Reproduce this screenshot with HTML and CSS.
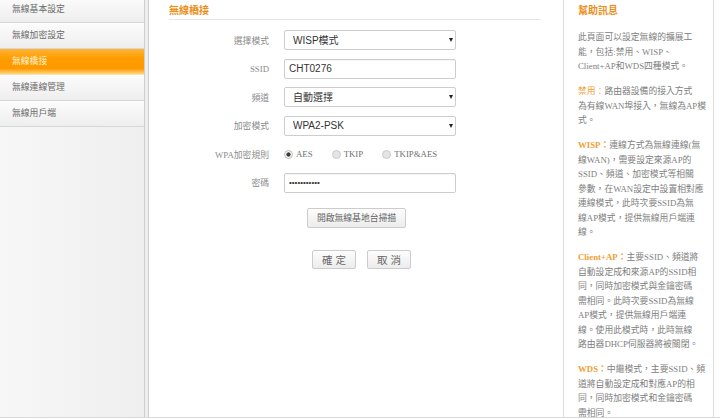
FILE: index.html
```html
<!DOCTYPE html>
<html lang="zh-Hant">
<head>
    <meta charset="UTF-8">
    <meta name="viewport" content="width=device-width, initial-scale=1.0">
    <title>無線橋接</title>
    <link rel="stylesheet" href="styles.css">
</head>
<body>
    <div class="page">
        <ul class="menu">
            <li>無線基本設定</li>
            <li>無線加密設定</li>
            <li class="active">無線橋接</li>
            <li>無線連線管理</li>
            <li>無線用戶端</li>
        </ul>

        <div class="main">
            <div class="content">
                <h2 class="title">無線橋接</h2>
                <form class="form">
                    <div class="row">
                        <label>選擇模式</label>
                        <div class="select-wrap">
                            <select class="field">
                                <option>WISP模式</option>
                                <option>Client+AP模式</option>
                                <option>WDS模式</option>
                                <option>禁用</option>
                            </select>
                        </div>
                    </div>

                    <div class="row">
                        <label>SSID</label>
                        <input type="text" class="field" value="CHT0276">
                    </div>

                    <div class="row">
                        <label>頻道</label>
                        <div class="select-wrap">
                            <select class="field">
                                <option>自動選擇</option>
                            </select>
                        </div>
                    </div>

                    <div class="row">
                        <label>加密模式</label>
                        <div class="select-wrap">
                            <select class="field">
                                <option>WPA2-PSK</option>
                                <option>WPA-PSK</option>
                            </select>
                        </div>
                    </div>

                    <div class="row">
                        <label>WPA加密規則</label>
                        <div class="radios">
                            <span class="radio"><input type="radio" name="cipher" checked> AES</span>
                            <span class="radio"><input type="radio" name="cipher"> TKIP</span>
                            <span class="radio"><input type="radio" name="cipher"> TKIP&amp;AES</span>
                        </div>
                    </div>

                    <div class="row">
                        <label>密碼</label>
                        <input type="password" class="field pw" value="12345678901">
                    </div>

                    <div class="actions scan">
                        <button type="button" class="btn btn-scan">開啟無線基地台掃描</button>
                    </div>

                    <div class="actions submit">
                        <button type="submit" class="btn btn-ok">確 定</button>
                        <button type="reset" class="btn btn-ok">取 消</button>
                    </div>
                </form>
            </div>

            <div class="help">
                <h3>幫助訊息</h3>
                <p>此頁面可以設定無線的擴展工<br>能，包括:禁用、WISP、<br>Client+AP和WDS四種模式。</p>
                <p><span class="key">禁用：</span>路由器設備的接入方式<br>為有線WAN埠接入，無線為AP模<br>式。</p>
                <p><span class="key strong">WISP：</span>連線方式為無線連線(無<br>線WAN)，需要設定來源AP的<br>SSID、頻道、加密模式等相關<br>參數，在WAN設定中設置相對應<br>連線模式，此時次要SSID為無<br>線AP模式，提供無線用戶端連<br>線。</p>
                <p><span class="key strong">Client+AP：</span>主要SSID、頻道將<br>自動設定成和來源AP的SSID相<br>同，同時加密模式與金鑰密碼<br>需相同。此時次要SSID為無線<br>AP模式，提供無線用戶端連<br>線。使用此模式時，此時無線<br>路由器DHCP伺服器將被關閉。</p>
                <p><span class="key strong">WDS：</span>中繼模式，主要SSID、頻<br>道將自動設定成和對應AP的相<br>同，同時加密模式和金鑰密碼<br>需相同。</p>
            </div>
        </div>
    </div>
</body>
</html>
```

FILE: styles.css
```css
body {
    margin: 0;
    background-color: #ffffff;
    font-family: 'Liberation Serif', 'Noto Sans CJK TC', serif;
    font-size: 8.8px;
    color: #808080;
}

.page {
    display: flex;
    height: 417px;
    border-bottom: 1px solid #d9d9d9;
    background-color: #eeeeee;
    overflow: hidden;
}

/* left menu */
.menu {
    width: 144px;
    margin: -3px 0 0;
    padding: 0;
    list-style: none;
    border-right: 1px solid #cfcfcf;
    background: linear-gradient(to right, #f7f7f7, #efefef);
}

.menu li {
    height: 25px;
    line-height: 25px;
    padding-left: 12px;
    border-bottom: 1px solid #d7d7d7;
    background: linear-gradient(#fcfcfc, #eeeeee);
    color: #6a6a6a;
}

.menu li.active {
    background: linear-gradient(#ffb43a, #ff9d00 35%, #ff9900 78%, #ffd77a);
    color: #fff4d6;
    border-bottom-color: #f3e3b8;
}

/* main area */
.main {
    flex: 1;
    display: flex;
    margin-left: 3px;
    border-left: 1px solid #cfcfcf;
    background-color: #ffffff;
}

.content {
    width: 372px;
    padding: 0 20px;
}

.title {
    margin: 0;
    padding-top: 2px;
    line-height: 17px;
    font-size: 10px;
    font-weight: bold;
    color: #ec8f1a;
    border-bottom: 1px solid #e6e6e6;
}

.form {
    display: flex;
    flex-direction: column;
    gap: 8.5px;
    padding-top: 10px;
}

.row {
    display: flex;
    align-items: center;
    height: 20px;
}

.row label {
    width: 100px;
    margin-right: 15px;
    text-align: right;
    color: #8a8a8a;
}

.field {
    width: 172px;
    height: 20px;
    box-sizing: border-box;
    margin: 0;
    border: 1px solid #cdcdcd;
    border-radius: 2px;
    background-color: #ffffff;
    font-family: 'Liberation Sans', 'Noto Sans CJK TC', sans-serif;
    font-size: 10px;
    color: #333;
    outline: none;
}

input.field {
    padding: 0 4px;
    box-shadow: inset 0 1px 1px rgba(0,0,0,0.04);
}

input.pw {
    font-size: 8px;
}

select.field {
    appearance: none;
    padding: 0 0 0 8px;
}

.select-wrap {
    position: relative;
}

.select-wrap::after {
    content: '';
    position: absolute;
    right: 3px;
    top: 8px;
    border-left: 2.5px solid transparent;
    border-right: 2.5px solid transparent;
    border-top: 4px solid #222;
    pointer-events: none;
}

.radios {
    display: flex;
    gap: 19px;
}

.radio {
    display: flex;
    align-items: center;
    gap: 3px;
    color: #707070;
}

.radio input {
    appearance: none;
    width: 9px;
    height: 9px;
    margin: 0;
    box-sizing: border-box;
    border: 1px solid #cacaca;
    border-radius: 50%;
    background-color: #e4e4e4;
}

.radio input:checked {
    border-color: #bdbdbd;
    background: radial-gradient(circle, #3a3a3a 0 1.8px, #f4f4f4 2.4px);
}

/* buttons */
.actions {
    display: flex;
    justify-content: center;
    gap: 11px;
}

.actions.scan {
    margin-top: 6.5px;
    padding-left: 3px;
}

.actions.submit {
    margin-top: 13.5px;
    padding-left: 13px;
}

.btn {
    height: 20px;
    padding: 0;
    border: 1px solid #cccccc;
    border-radius: 2px;
    background: linear-gradient(#fdfdfd, #ececec);
    font-family: 'Liberation Sans', 'Noto Sans CJK TC', sans-serif;
    color: #666;
    cursor: pointer;
}

.btn-scan {
    width: 99px;
    font-size: 8.8px;
}

.btn-ok {
    width: 44px;
    height: 19px;
    font-size: 10.5px;
}

/* help panel */
.help {
    width: 135px;
    margin-left: 2px;
    padding-left: 14px;
    border-left: 1px solid #dddddd;
    border-right: 1px solid #dddddd;
    white-space: nowrap;
}

.help h3 {
    margin: 0;
    padding-top: 3px;
    line-height: 16px;
    font-size: 10px;
    font-weight: bold;
    color: #ec8f1a;
}

.help p {
    margin: 0 0 10.5px;
    line-height: 14.5px;
}

.help h3 + p {
    margin-top: 11px;
}

.key {
    color: #f0a035;
}

.key.strong {
    font-weight: bold;
}
```
